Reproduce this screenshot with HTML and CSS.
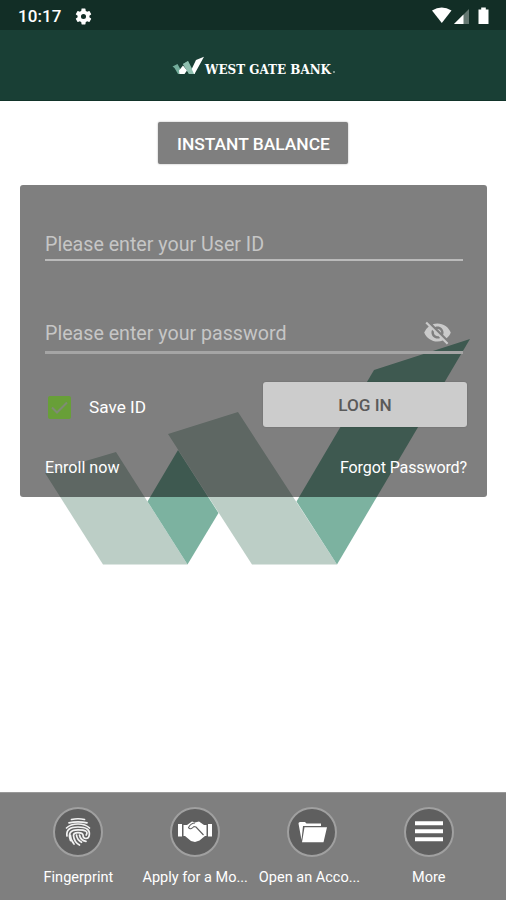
FILE: index.html
```html
<!DOCTYPE html>
<html lang="en">
<head>
<meta charset="utf-8">
<title>West Gate Bank</title>
<link rel="stylesheet" href="styles.css">
</head>
<body>
<div class="screen">
  <div class="status">
    <span class="time">10:17</span>
    <svg class="gear" width="19" height="19" viewBox="0 0 24 24"><path d="M19.43 12.98c.04-.32.07-.64.07-.98s-.03-.66-.07-.98l2.11-1.65c.19-.15.24-.42.12-.64l-2-3.46c-.12-.22-.39-.3-.61-.22l-2.49 1c-.52-.4-1.08-.73-1.69-.98l-.38-2.65A.49.49 0 0 0 14 2h-4c-.25 0-.46.18-.49.42l-.38 2.65c-.61.25-1.17.59-1.69.98l-2.49-1c-.23-.09-.49 0-.61.22l-2 3.46c-.13.22-.07.49.12.64l2.11 1.65c-.04.32-.07.65-.07.98s.03.66.07.98l-2.11 1.65c-.19.15-.24.42-.12.64l2 3.46c.12.22.39.3.61.22l2.49-1c.52.4 1.08.73 1.69.98l.38 2.65c.03.24.24.42.49.42h4c.25 0 .46-.18.49-.42l.38-2.65c.61-.25 1.17-.59 1.69-.98l2.49 1c.23.09.49 0 .61-.22l2-3.46c.12-.22.07-.49-.12-.64zM12 15.2a3.2 3.2 0 1 1 0-6.4 3.2 3.2 0 0 1 0 6.4z"/></svg>
    <svg class="signals" width="60" height="20" viewBox="0 0 60 20"><path d="M0 4.500Q9.800-1.500 19.500 4.500L9.800 17Z"/><path d="M22 18L37 3V18Z" opacity=".35"/><path d="M22 18L31.500 8.500V18Z"/><path d="M46.500 3.500h2.700V1.500h4.600v2h2.700V18h-10Z"/></svg>
  </div>
  <header class="bar">
    <svg width="166" height="32" viewBox="0 -4 166 32">
      <path fill="#73ad9b" d="M.5 10.500l5-2.500 5.500 10H6L2.500 12ZM11 8l5-3 7 13h-6Z"/>
      <path fill="#fff" d="M7 14.500l4-5 4 5-2.500 3.500H7.500ZM18.500 15.500L24 4 32 .8 22.500 18h-3Z"/>
      <path fill="#8fbfaf" d="M11 8l5-3 6 13h-5Z"/>
      <text class="brand" x="33" y="17.500" textLength="126" lengthAdjust="spacingAndGlyphs">WEST GATE BANK</text>
      <circle cx="162" cy="16" r=".9" fill="#a9beb6"/>
    </svg>
  </header>
  <main class="content">
    <svg class="mark" width="430" height="230" viewBox="42 336 430 230">
      <g fill="#bccec6"><path d="M45 473L116 452L187.500 564.500H103Z"/><path d="M168 434L238 412L337 564.500H252Z"/></g>
      <g fill="#7cb2a0"><path d="M178 450L147.500 501.500L187.500 564.500L218.500 513Z"/><path d="M374 370L470 339L337 564.500L296.500 501.500Z"/></g>
    </svg>
    <button class="instant">INSTANT BALANCE</button>
    <form class="card">
      <div class="field user"><span>Please enter your User ID</span></div>
      <div class="field pass"><span>Please enter your password</span>
        <svg class="eye" width="29" height="29" viewBox="0 0 24 24"><path d="M12 7c2.760 0 5 2.240 5 5 0 .65-.13 1.260-.36 1.830l2.920 2.920c1.510-1.260 2.700-2.890 3.430-4.750-1.730-4.390-6-7.500-11-7.500-1.400 0-2.740.25-3.980.7l2.160 2.160C10.740 7.130 11.350 7 12 7zM2 4.270l2.280 2.280.46.46A11.800 11.800 0 0 0 1 12c1.730 4.390 6 7.500 11 7.500 1.550 0 3.030-.3 4.380-.84l.42.42L19.730 22 21 20.730 3.270 3 2 4.270zM7.530 9.800l1.550 1.550c-.05.21-.08.43-.08.65 0 1.660 1.340 3 3 3 .22 0 .44-.03.65-.08l1.550 1.550c-.67.33-1.410.53-2.200.53-2.760 0-5-2.240-5-5 0-.79.2-1.530.53-2.200zm4.310-.78l3.150 3.150.02-.16c0-1.660-1.340-3-3-3l-.17.01z"/></svg>
      </div>
      <div class="actions">
        <label class="save"><svg width="23" height="23" viewBox="0 0 23 23"><rect width="23" height="23" rx="2" fill="#689f38"/><path d="M4 11.500l5 5L19 6.500" fill="none" stroke="#7f8b75" stroke-width="2"/></svg><span>Save ID</span></label>
        <button class="login" type="button">LOG IN</button>
      </div>
      <div class="links"><a class="enroll">Enroll now</a><a class="forgot">Forgot Password?</a></div>
    </form>
  </main>
  <nav class="nav">
    <a class="item"><span class="disc"><svg width="32" height="32" viewBox="0 0 32 32"><g fill="none" stroke="#f2f2f2" stroke-width="1.700" stroke-linecap="round"><path d="M9.500 3.500Q16 2 22.500 3.500M7 6.800Q16 5 25 6.800M4.500 12Q8.500 8 16 8T27.500 12"/><path d="M5 20Q3.500 11 16 11T27.300 19Q27 22.500 24 22.500T21 19Q20.500 16.600 16 16.600T11.500 19.500Q12 26 17.500 29M8.500 24.500Q4.500 13.800 16 13.800T24.200 19M12 28Q8.300 23.500 8.300 19M14.500 19Q15 23.800 19.500 26.300M17.500 19Q18.500 24.500 24 25.300"/></g></svg></span><span class="caption">Fingerprint</span></a>
    <a class="item"><span class="disc"><svg width="36" height="32" viewBox="0 0 36 32"><path fill="#fff" d="M1 8h4v12.500H1ZM31 8h4v12.500h-4ZM6.500 9h3.500l5-3.500 3 1L22 5.500 27 9h2.500v11H28l-5.500 4.500L18 26l-4-1-6-5H6.500Z"/><path fill="none" stroke="#5d5d5d" stroke-width="1.100" d="M18 7q-4 0-6.500 4.500c1 2 3.500 1.500 5.500-1l2 .5 7.500 8"/></svg></span><span class="caption">Apply for a Mo...</span></a>
    <a class="item"><span class="disc"><svg width="32" height="32" viewBox="0 0 32 32"><path fill="#fff" d="M2.500 7.500Q2.500 6 4 6H9l1.500 1.500H25V10H7L5.500 24ZM8.500 11.300H31L27.500 26.300H6Z"/></svg></span><span class="caption open">Open an Acco...</span></a>
    <a class="item"><span class="disc"><svg width="32" height="32" viewBox="0 0 32 32"><path fill="#fff" d="M2 5.200h28v4H2ZM2 13.200h28v4H2ZM2 21.200h28v4H2Z"/></svg></span><span class="caption">More</span></a>
  </nav>
</div>
</body>
</html>
```
FILE: styles.css
```css
* { box-sizing: border-box; }
body { margin: 0; font-family: Roboto, sans-serif; color: #fff; background: #fff; }
.screen { width: 506px; height: 900px; display: flex; flex-direction: column; overflow: hidden; }
.status { height: 30px; background: #122e26; display: flex; align-items: center; padding: 2px 14px 0 18px; }
.time { font-size: 17px; font-weight: 500; line-height: 20px; width: 56px; letter-spacing: .1px; }
.status svg { fill: #fff; }
.signals { margin-left: auto; }
.bar { height: 71px; background: #193f35; border-bottom: 1px solid #12342a; display: flex; padding: 22px 0 0 172px; }
.bar svg { overflow: visible; }
.brand { font: bold 13.500px "DejaVu Serif", serif; fill: #fff; }
.content { position: relative; flex: 1; padding: 21px 19px 0 20px; }
.mark { position: absolute; left: 42px; top: 235px; }
button { font-family: inherit; border: 0; padding: 0; display: block; }
.instant { width: 190px; height: 42px; padding-top: 2px; margin: 0 0 21px 138.400px; background: #7f7f7f; color: #fff; font-size: 17.400px; font-weight: 500; border-radius: 2px; box-shadow: 0 0 2px rgba(0,0,0,.35); }
.card { position: relative; height: 312px; background: rgba(0,0,0,.5); border-radius: 3px; padding: 48px 20px 0 25px; }
.field { width: 418px; display: flex; justify-content: space-between; border-bottom: 2px solid #bababa; color: #c6c6c6; font-size: 19.650px; line-height: 24px; white-space: nowrap; }
.user { height: 28px; }
.pass { height: 32px; margin-top: 61px; border-bottom: 3px solid #a5a5a5; }
.eye { fill: #cacaca; margin-right: 11px; margin-top: -4px; }
.actions { display: flex; justify-content: space-between; margin-top: 28px; height: 45px; }
.save { display: flex; align-items: center; gap: 18px; padding: 5px 0 0 3px; font-size: 17.200px; }
.login { width: 204px; height: 45px; border-radius: 3px; background: #ccc; color: #5a5a5a; font-size: 17.200px; font-weight: 500; box-shadow: 0 0 2px rgba(0,0,0,.2); }
.links { display: flex; justify-content: space-between; margin-top: 30px; font-size: 16.100px; line-height: 22px; }
.forgot { letter-spacing: -.15px; }
.nav { height: 108px; background: #7f7f7f; border-top: 1px solid #999; display: flex; padding-left: 20px; }
.item { width: 116.800px; padding-top: 14px; display: flex; flex-direction: column; align-items: center; }
.disc { width: 50px; height: 50px; border-radius: 50%; border: 2px solid #a0a0a0; background: #5f5f5f; display: flex; align-items: center; justify-content: center; }
.caption { margin-top: 12px; font-size: 14.500px; line-height: 18px; white-space: nowrap; }
.open { margin-right: 5px; }
```
